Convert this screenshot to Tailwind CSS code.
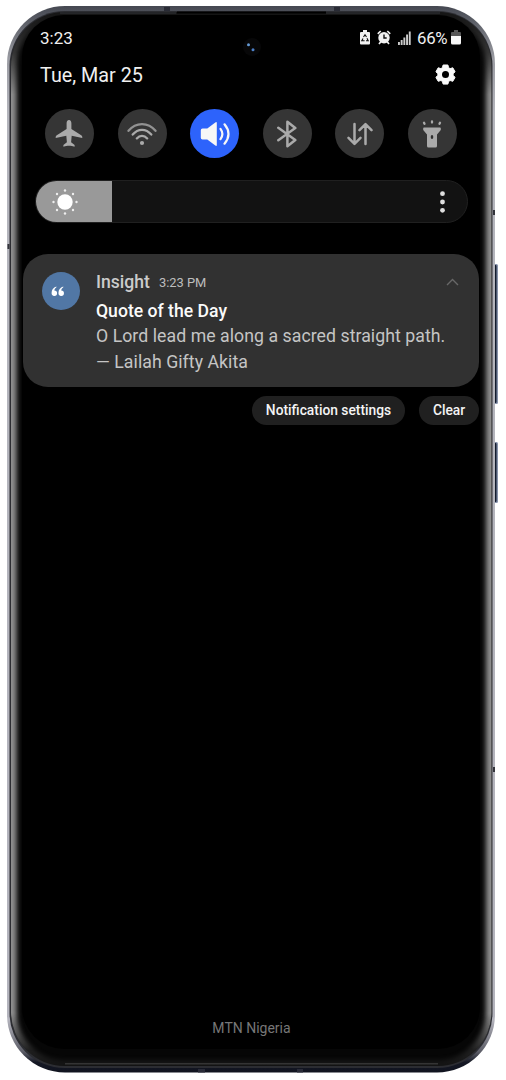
<!DOCTYPE html>
<html lang="en">
<head>
<meta charset="utf-8">
<meta name="viewport" content="width=device-width, initial-scale=1">
<title>Notification shade</title>
<script src="https://cdn.jsdelivr.net/npm/@tailwindcss/browser@4"></script>
</head>
<body class="bg-white">
<main class="relative isolate flex h-[1080px] w-[506px] flex-col overflow-hidden font-['Roboto','Liberation_Sans',sans-serif] text-[#f0f0f0]">

<!-- Device body -->
<svg class="absolute inset-0 -z-10" width="506" height="1080" viewBox="0 0 506 1080" fill="none">
  <defs>
    <linearGradient id="rim" x1="0" y1="6" x2="0" y2="1073" gradientUnits="userSpaceOnUse">
      <stop offset="0" stop-color="#454851"/><stop offset=".015" stop-color="#5d6068"/><stop offset=".05" stop-color="#9b9ca3"/><stop offset=".1" stop-color="#b4b5bc"/><stop offset=".95" stop-color="#b4b4bd"/><stop offset=".98" stop-color="#5d5e68"/><stop offset=".99" stop-color="#151824"/><stop offset="1" stop-color="#10131f"/>
    </linearGradient>
    <linearGradient id="fade" x1="0" y1="10" x2="0" y2="1066" gradientUnits="userSpaceOnUse">
      <stop offset="0" stop-color="#fff" stop-opacity=".1"/><stop offset=".04" stop-color="#fff" stop-opacity=".35"/><stop offset=".08" stop-color="#fff"/><stop offset=".95" stop-color="#fff"/><stop offset=".985" stop-color="#fff" stop-opacity=".2"/><stop offset="1" stop-color="#fff" stop-opacity=".1"/>
    </linearGradient>
    <mask id="m"><rect width="506" height="1080" fill="url(#fade)"/></mask>
    <clipPath id="c"><rect x="11" y="12" width="480.500" height="1054" rx="54"/></clipPath>
    <filter id="soft" x="0" y="0" width="506" height="1080" filterUnits="userSpaceOnUse"><feGaussianBlur stdDeviation="2.500"/></filter>
  </defs>
  <rect x="493" y="264" width="5" height="140" rx="1.500" fill="#8792ab"/><rect x="493" y="265" width="3.500" height="138" rx="1" fill="#111a2c"/>
  <rect x="493" y="442" width="5" height="61" rx="1.500" fill="#8792ab"/><rect x="493" y="443" width="3.500" height="59" rx="1" fill="#111a2c"/>
  <rect x="7" y="6" width="488" height="1066.500" rx="58" fill="url(#rim)"/>
  <rect x="9.500" y="11" width="483" height="1057" rx="55" fill="#2c2d32"/>
  <g clip-path="url(#c)">
    <rect x="11" y="12" width="481" height="1054" fill="#060606"/>
    <g mask="url(#m)"><rect x="11" y="12" width="480.500" height="1054" rx="54" stroke="#909090" stroke-width="11" filter="url(#soft)"/></g>
  </g>
  <path d="M65 1063.700H438" stroke="#343434" stroke-width="1.500"/>
  <path d="M60 13H176M326 13H440" stroke="#33343a" stroke-width="1"/>
  <path d="M177 12.500H326" stroke="#000" stroke-width="2"/>
  <rect x="22" y="15" width="458" height="1034" rx="42" fill="#000"/>
  <path d="M164 7h6v4h-6zM334 7h6v4h-6z" fill="#292b35"/>
  <path d="M198 1069h7v3.500h-7zM297 1069h6v3.500h-6z" fill="#292b38"/>
  <path d="M7.500 244h2v5h-2zM493 210h2v5h-2zM493 767h2v5h-2z" fill="#33343b"/>
  <circle cx="252" cy="47" r="9" fill="#070708"/>
  <circle cx="248.500" cy="44.800" r="1.500" fill="#659bd6"/><circle cx="253" cy="49.700" r="1.500" fill="#4d80c8"/>
</svg>

<!-- Status bar -->
<header class="mt-[26px] flex h-6 items-center justify-between pl-10 pr-[45px]">
  <time class="text-[17px] leading-6">3:23</time>
  <div class="flex items-center">
    <svg class="-mt-px" width="10" height="15" viewBox="0 0 10 15"><path d="M3 0h4v2h2q1 0 1 1v10.500q0 1-1 1H1q-1 0-1-1V3q0-1 1-1h2z" fill="#f2f2f2"/><path d="M3.500 7 5 4.700 6.500 7M7 8.200l1.200 2.500H6M4.600 10.700H1.800L3 8.500" fill="none" stroke="#111" stroke-width="1.100"/></svg>
    <svg class="-mt-px ml-[7px]" width="14" height="15" viewBox="0 0 14 15"><circle cx="7" cy="7.800" r="5.700" fill="#f2f2f2"/><path d="M.8 3.800 3.700 1M13.200 3.800 10.300 1M2 14l2-2.500M12 14l-2-2.500" stroke="#f2f2f2" stroke-width="1.700"/><path d="M7 4.500V8h2.700" fill="none" stroke="#111" stroke-width="1.400"/></svg>
    <svg class="-mt-px ml-[7px]" width="13" height="14" viewBox="0 0 13 14" fill="#ccc"><path d="M0 11h1.900v3H0zM2.700 9h1.900v5H2.700zM5.400 6.500h1.900V14H5.400zM8.100 3.500H10V14H8.100zM10.800.5h1.900V14h-1.900z"/></svg>
    <span class="ml-[6px] w-[34px] text-[16.800px] leading-6 tracking-[-0.3px]">66%</span>
    <svg class="-mt-px" width="10" height="15" viewBox="0 0 10 15"><path d="M3 0h4v2h2q1 0 1 1v3H0V3q0-1 1-1h2z" fill="#555"/><path d="M0 6h10v7q0 1.500-1.500 1.500h-7Q0 14.500 0 13z" fill="#f7f7f7"/></svg>
  </div>
</header>

<div class="mt-[14px] flex h-6 items-center justify-between pl-10 pr-[50px]">
  <h1 class="text-[19.800px] leading-6">Tue, Mar 25</h1>
  <svg class="-mt-[4px]" width="21" height="21" viewBox="0 0 21 21" fill="#fafafa"><path d="M8.100 1h4.800l.7 2.700 1.500.9 2.700-.8 2.300 4-2 1.900v1.700l2 1.900-2.300 4-2.700-.8-1.500.9-.7 2.700H8.100l-.7-2.700-1.500-.9-2.700.8-2.300-4 2-1.900V9.700l-2-1.900 2.300-4 2.700.8 1.500-.9z" stroke="#fafafa" stroke-width="1" stroke-linejoin="round"/><circle cx="10.500" cy="10.500" r="3.500" fill="#000"/></svg>
</div>

<!-- Quick toggles -->
<section class="ml-[45px] mt-[21px] flex w-[412px] justify-between text-[#aaa]">
  <button class="grid size-[49px] place-items-center rounded-full bg-[#353535]"><svg class="-ml-px -mt-px" width="28" height="28" viewBox="0 0 28 28" fill="currentColor"><path d="M14 1c1.600 0 2.400 1.500 2.400 3.500v5.600l9.800 6.200c.9.600 1.200 1.400 1.100 2.700l-10.600-2.200-.6 6.500 3.500 2.600v1.900c-2.400-.8-3.600-1.100-5.600-1.100s-3.200.3-5.600 1.100v-1.900l3.500-2.600-.6-6.500L.7 19c-.1-1.300.2-2.100 1.100-2.700l9.800-6.200V4.500C11.600 2.500 12.400 1 14 1z"/></svg></button>
  <button class="grid size-[49px] place-items-center rounded-full bg-[#353535]"><svg class="-ml-px mt-px" width="30" height="24" viewBox="0 0 30 24" fill="none" stroke="currentColor" stroke-width="2.300" stroke-linecap="round"><path d="M1.500 8.800C9-.2 21-.2 28.500 8.800" opacity=".8"/><path d="M5.700 12.600C11 6.200 19 6.200 24.300 12.600M9.800 16.400c3-3.500 7.400-3.500 10.400 0"/><circle cx="15" cy="21" r="2.100" fill="currentColor" stroke="none"/></svg></button>
  <button class="grid size-[49px] place-items-center rounded-full bg-[#2d63fb]"><svg width="30" height="26" viewBox="0 0 30 26" fill="none" stroke="#f7f7f7" stroke-width="2.200" stroke-linecap="round"><path d="M2.500 7.500h4.800L15.300 1.500q1.500-1 1.500.6v21.800q0 1.600-1.500.6L7.300 18.500H2.500Q.8 18.500.8 16.800V9.200Q.8 7.500 2.500 7.500z" fill="#f7f7f7" stroke="none"/><path d="M20.500 7.800q3.800 5.200 0 10.400M24.500 3.300q8 9.700 0 19.400"/></svg></button>
  <button class="grid size-[49px] place-items-center rounded-full bg-[#353535]"><svg width="20" height="28" viewBox="0 0 20 28" fill="none" stroke="currentColor" stroke-width="2.500" stroke-linecap="round" stroke-linejoin="round"><path d="M1.300 7.800 18.300 20 10.400 26.300V1.700L18.300 8 1.300 20.200"/></svg></button>
  <button class="grid size-[49px] place-items-center rounded-full bg-[#353535]"><svg width="26" height="24" viewBox="0 0 26 24" fill="none" stroke="currentColor" stroke-width="2.500" stroke-linecap="round" stroke-linejoin="round"><path d="M7.500 2v19.500M1.500 15.800l6 6 6-6M18.500 22V2.200M12.500 8.200l6-6 6 6"/></svg></button>
  <button class="grid size-[49px] place-items-center rounded-full bg-[#353535]"><svg width="20" height="28" viewBox="0 0 20 28" fill="currentColor"><path d="M2 7.500h16q.8 0 .8.800V10l-3.800 4.500V26q0 1.500-1.500 1.500h-7Q5 27.500 5 26V14.500L1.200 10V8.300q0-.8.8-.8z"/><ellipse cx="10" cy="17" rx="1.300" ry="1.900" fill="#303030"/><path d="m2 2.700.5 1M18 2.700l-.5 1M10 1.400v1.200" stroke="currentColor" stroke-width="2.300" stroke-linecap="round"/></svg></button>
</section>

<!-- Brightness -->
<section class="ml-[35px] mt-[22px] flex h-[43px] w-[433px] items-center justify-between overflow-hidden rounded-full border border-[#202020] bg-[#121212]">
  <div class="-my-px -ml-px flex h-[43px] w-[77px] items-center bg-[#999] pl-[17px]">
    <svg width="26" height="26" viewBox="0 0 26 26" fill="#fff"><circle cx="13" cy="13" r="7.700"/><g fill="#eee"><circle cx="13" cy="1.500" r="1.200"/><circle cx="13" cy="24.500" r="1.200"/><circle cx="1.500" cy="13" r="1.200"/><circle cx="24.500" cy="13" r="1.200"/><circle cx="5" cy="5" r="1.200"/><circle cx="21" cy="5" r="1.200"/><circle cx="5" cy="21" r="1.200"/><circle cx="21" cy="21" r="1.200"/></g></svg>
  </div>
  <svg class="mr-[22px]" width="5" height="22" viewBox="0 0 5 22" fill="#dedede"><circle cx="2.500" cy="2.700" r="2.400"/><circle cx="2.500" cy="11" r="2.400"/><circle cx="2.500" cy="19.300" r="2.400"/></svg>
</section>

<!-- Notification -->
<article class="ml-[23px] mt-[31px] flex h-[133px] w-[456px] rounded-[25px] bg-[#313131] pl-[19px]">
  <div class="mt-[18px] grid size-[38px] shrink-0 place-items-center rounded-full bg-[#5177a5]"><svg class="-ml-[6px] mt-px" width="14" height="11" viewBox="0 0 15 12" fill="#fff"><path d="M5.700.5C2.300 1.600.5 4 .5 7.700a3 3 0 1 0 3-2.900c.2-1.500.9-2.600 2.300-3.500zM13.200.5C9.800 1.600 8 4 8 7.700a3 3 0 1 0 3-2.900c.2-1.500.9-2.600 2.300-3.500z"/></svg></div>
  <div class="ml-4 flex-1 pt-4">
    <div class="flex h-6 items-center pr-[20px]"><span class="text-[17.600px] font-medium leading-6 text-[#cbcbcb]">Insight</span><time class="ml-[9px] mt-[2px] text-[12.900px] text-[#bdbdbd]">3:23 PM</time><svg class="ml-auto" width="13" height="8" viewBox="0 0 13 8" fill="none" stroke="#686868" stroke-width="1.400"><path d="m1 7 5.500-5.500L12 7"/></svg></div>
    <h2 class="mt-[5px] text-[17.600px] font-medium leading-6 text-[#fafafa]">Quote of the Day</h2>
    <p class="whitespace-nowrap text-[17.700px] leading-[26px] tracking-[0.05px] text-[#c5c5c5]">O Lord lead me along a sacred straight path.<br>— Lailah Gifty Akita</p>
  </div>
</article>

<div class="mr-[27px] mt-[9px] flex justify-end gap-[14px] text-[13.800px] font-medium text-[#f4f4f4]">
  <button class="h-[29px] w-[153px] rounded-full bg-[#202020]">Notification settings</button>
  <button class="h-[29px] w-[60px] rounded-full bg-[#202020]">Clear</button>
</div>

<footer class="mb-[42px] mt-auto pr-[3px] text-center text-[14px] leading-5 text-[#777]">MTN Nigeria</footer>
</main>
</body>
</html>
